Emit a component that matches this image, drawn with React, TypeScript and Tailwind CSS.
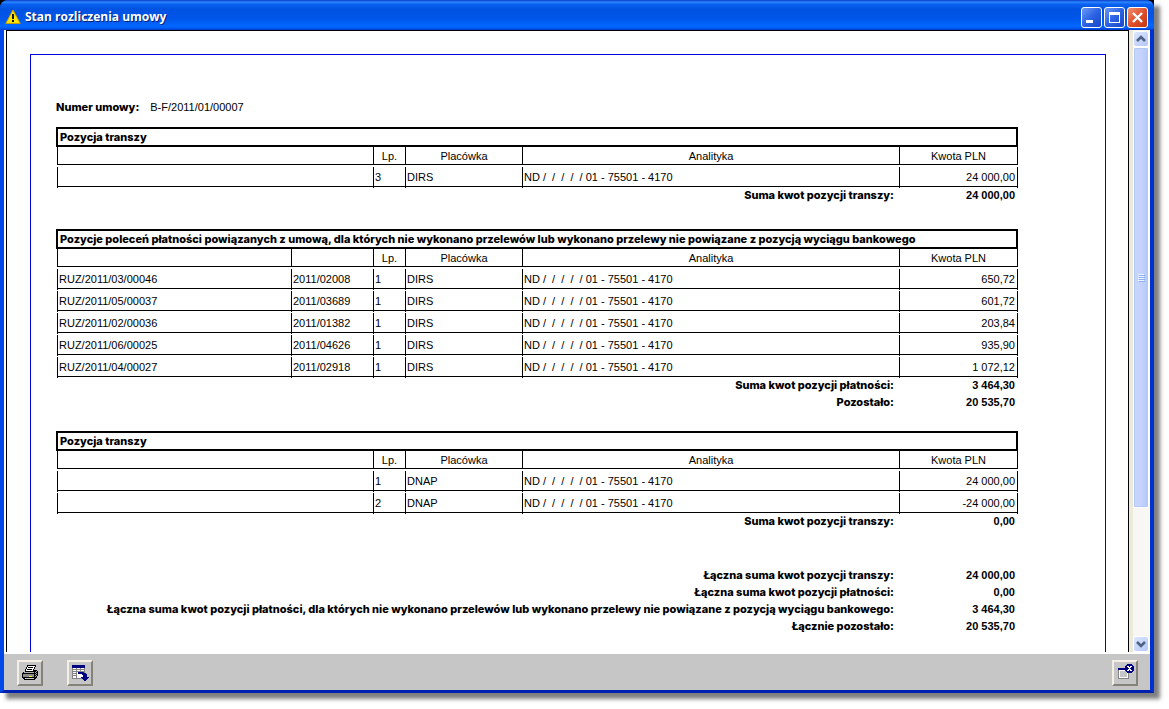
import clsx from "clsx";
import type { ReactNode } from "react";

interface Row {
  document?: string;
  order?: string;
  lp: string;
  unit: string;
  analytics: string;
  amount: string;
}

interface Sum {
  label: string;
  amount: string;
}

const ANALYTICS = "ND /  /  /  /  / 01 - 75501 - 4170";

const firstTranche: Row[] = [
  { lp: "3", unit: "DIRS", analytics: ANALYTICS, amount: "24 000,00" },
];

const payments: Row[] = [
  ["RUZ/2011/03/00046", "2011/02008", "650,72"],
  ["RUZ/2011/05/00037", "2011/03689", "601,72"],
  ["RUZ/2011/02/00036", "2011/01382", "203,84"],
  ["RUZ/2011/06/00025", "2011/04626", "935,90"],
  ["RUZ/2011/04/00027", "2011/02918", "1 072,12"],
].map(([document, order, amount]) => ({
  document,
  order,
  lp: "1",
  unit: "DIRS",
  analytics: ANALYTICS,
  amount,
}));

const secondTranche: Row[] = [
  { lp: "1", unit: "DNAP", analytics: ANALYTICS, amount: "24 000,00" },
  { lp: "2", unit: "DNAP", analytics: ANALYTICS, amount: "-24 000,00" },
];

const totals: Sum[] = [
  { label: "Łączna suma kwot pozycji transzy:", amount: "24 000,00" },
  { label: "Łączna suma kwot pozycji płatności:", amount: "0,00" },
  {
    label:
      "Łączna suma kwot pozycji płatności, dla których nie wykonano przelewów lub wykonano przelewy nie powiązane z pozycją wyciągu bankowego:",
    amount: "3 464,30",
  },
  { label: "Łącznie pozostało:", amount: "20 535,70" },
];

export default function App() {
  return (
    <div className="h-screen bg-white pr-[15px] pb-4 font-['Liberation_Sans',Arial,sans-serif] text-[11px] text-black">
      <div className="h-full bg-black shadow-[6px_6px_4px_0_rgba(0,0,0,0.5)]">
        <div className="flex h-full flex-col rounded-t-lg bg-[#0040e0]">
          <TitleBar />
          <div className="flex min-h-0 flex-1 flex-col border-x-4 border-b-[3px] border-r-[#0030d0] border-b-[#0020b0] border-l-[#0048e8]">
            <div className="flex min-h-0 flex-1 bg-white pb-[2px] pl-[2px]">
              <main className="min-w-0 flex-1 overflow-hidden border-x border-t border-black bg-white pt-[23px] pr-[22px] pl-[23px]">
                <Report />
              </main>
              <ScrollBar />
            </div>
            <BottomBar />
          </div>
        </div>
      </div>
    </div>
  );
}

function TitleBar() {
  return (
    <header className="flex h-[30px] shrink-0 items-center rounded-t-lg bg-[linear-gradient(#0a3cc8_0%,#2b86ff_7%,#0a62f0_14%,#0053e1_30%,#0055e8_60%,#0066ff_85%,#0060f8_93%,#0038c8_100%)] pt-1 pr-[6px] pl-[5px]">
      <svg width="16" height="16" viewBox="0 0 16 16" aria-hidden="true">
        <path
          d="M8 1 L15.2 14.4 H0.8 Z"
          fill="#ffe600"
          stroke="#c8a000"
          strokeLinejoin="round"
        />
        <path d="M7 5h2v5H7zM7 11h2v2H7z" fill="#111" />
      </svg>
      <h1 className="ml-1 flex-1 font-['Open_Sans',sans-serif] text-[12px] font-bold text-white [text-shadow:1px_1px_0_#00207a]">
        Stan rozliczenia umowy
      </h1>
      <div className="flex gap-[2px]">
        <CaptionButton label="Minimalizuj">
          <path d="M5 13h7v3H5z" fill="#fff" />
        </CaptionButton>
        <CaptionButton label="Maksymalizuj">
          <path d="M5 5h11v11H5zM6 8v7h9V8z" fill="#fff" fillRule="evenodd" />
        </CaptionButton>
        <CaptionButton label="Zamknij" red>
          <path d="M6 6l9 9M15 6l-9 9" stroke="#fff" strokeWidth="2.4" />
        </CaptionButton>
      </div>
    </header>
  );
}

function CaptionButton({
  label,
  red = false,
  children,
}: {
  label: string;
  red?: boolean;
  children: ReactNode;
}) {
  return (
    <button
      type="button"
      aria-label={label}
      className={clsx(
        "size-[21px] rounded-[3px] border border-white",
        red
          ? "bg-linear-to-br from-[#f09070] via-[#e0502c] to-[#c03810]"
          : "bg-linear-to-br from-[#6a98f8] via-[#2c62e4] to-[#1848c8]"
      )}
    >
      <svg width="19" height="19" viewBox="1 1 19 19">
        {children}
      </svg>
    </button>
  );
}

function Report() {
  return (
    <article className="h-full min-h-[598px] border-x border-t border-[#0000e0] pt-[44px] pr-[87px] pl-[25px] leading-[17px]">
      <p className="mb-[11px]">
        <b className="mr-[11px] font-[Inter,sans-serif] font-extrabold">
          Numer umowy:
        </b>
        B-F/2011/01/00007
      </p>
      <Section
        title="Pozycja transzy"
        rows={firstTranche}
        sums={[{ label: "Suma kwot pozycji transzy:", amount: "24 000,00" }]}
        className="mb-6"
      />
      <Section
        title="Pozycje poleceń płatności powiązanych z umową, dla których nie wykonano przelewów lub wykonano przelewy nie powiązane z pozycją wyciągu bankowego"
        rows={payments}
        sums={[
          { label: "Suma kwot pozycji płatności:", amount: "3 464,30" },
          { label: "Pozostało:", amount: "20 535,70" },
        ]}
        className="mb-[19px]"
        split
      />
      <Section
        title="Pozycja transzy"
        rows={secondTranche}
        sums={[{ label: "Suma kwot pozycji transzy:", amount: "0,00" }]}
        className="mb-[37px]"
      />
      <table className="w-full border-separate border-spacing-0">
        <tbody>
          {totals.map((sum) => (
            <SumRow key={sum.label} sum={sum} />
          ))}
        </tbody>
      </table>
    </article>
  );
}

function Section({
  title,
  rows,
  sums,
  className,
  split = false,
}: {
  title: string;
  rows: Row[];
  sums: Sum[];
  className: string;
  split?: boolean;
}) {
  return (
    <section className={className}>
      <h2 className="h-5 border-2 border-black pl-[2px] font-[Inter,sans-serif] leading-4 font-extrabold whitespace-nowrap">
        {title}
      </h2>
      <div className="pl-px">
        <table className="w-full table-fixed border-separate border-spacing-0">
          <colgroup>
            {split ? (
              <>
                <col className="w-[234px]" />
                <col className="w-[82px]" />
              </>
            ) : (
              <col className="w-[316px]" />
            )}
            <col className="w-8" />
            <col className="w-[117px]" />
            <col />
            <col className="w-[119px]" />
          </colgroup>
          <thead>
            <tr>
              <HeaderCell />
              {split && <HeaderCell />}
              <HeaderCell>Lp.</HeaderCell>
              <HeaderCell>Placówka</HeaderCell>
              <HeaderCell>Analityka</HeaderCell>
              <HeaderCell last>Kwota PLN</HeaderCell>
            </tr>
          </thead>
          <tbody>
            {rows.map((row, index) => (
              <tr key={index}>
                <Cell>{row.document}</Cell>
                {split && <Cell>{row.order}</Cell>}
                <Cell>{row.lp}</Cell>
                <Cell>{row.unit}</Cell>
                <Cell>{row.analytics}</Cell>
                <Cell last>{row.amount}</Cell>
              </tr>
            ))}
          </tbody>
          <tfoot>
            {sums.map((sum) => (
              <SumRow key={sum.label} sum={sum} span={split ? 5 : 4} />
            ))}
          </tfoot>
        </table>
      </div>
    </section>
  );
}

function HeaderCell({
  last = false,
  children,
}: {
  last?: boolean;
  children?: ReactNode;
}) {
  return (
    <th className="p-0 pb-px font-normal">
      <div
        className={clsx("h-[18px] border-b border-l border-black leading-[19px]", {
          "border-r": last,
        })}
      >
        {children}
      </div>
    </th>
  );
}

// The vertical rules run one pixel below the horizontal one
function Cell({
  last = false,
  children,
}: {
  last?: boolean;
  children?: ReactNode;
}) {
  return (
    <td className="p-0 pt-px">
      <div
        className={clsx("h-[21px] border-l border-black", {
          "border-r text-right": last,
        })}
      >
        <div
          className={clsx(
            "h-5 border-b border-black leading-5 whitespace-pre",
            last ? "pr-[2px]" : "pl-px"
          )}
        >
          {children}
        </div>
      </div>
    </td>
  );
}

function SumRow({ sum, span = 1 }: { sum: Sum; span?: number }) {
  return (
    <tr className="h-[17px] text-right align-top leading-[15px] font-bold whitespace-nowrap">
      <td
        colSpan={span}
        className="p-0 pr-[5px] font-[Inter,sans-serif] font-extrabold"
      >
        {sum.label}
      </td>
      <td className="w-[119px] p-0 pr-[3px]">{sum.amount}</td>
    </tr>
  );
}

function ScrollBar() {
  return (
    <div className="flex w-[21px] shrink-0 flex-col border-r border-l-4 border-r-white border-l-[#eceadb] bg-[#f8f7f3] pt-px">
      <ScrollButton label="W górę" path="M4 10l4-4 4 4" />
      <div className="flex flex-[461] items-center justify-center rounded-[2px] border border-white bg-linear-to-r from-[#c8d6fb] via-[#c4d3fd] to-[#b4c8f8] shadow-[inset_0_0_0_1px_#b4c8f4]">
        <svg width="7" height="8" viewBox="0 0 7 8" shapeRendering="crispEdges">
          <path d="M0 0h6v1H0zM0 2h6v1H0zM0 4h6v1H0zM0 6h6v1H0z" fill="#eef4fe" />
          <path d="M1 1h6v1H1zM1 3h6v1H1zM1 5h6v1H1zM1 7h6v1H1z" fill="#8cb0f8" />
        </svg>
      </div>
      <div className="flex-[128]" />
      <ScrollButton label="W dół" path="M4 6l4 4 4-4" />
    </div>
  );
}

function ScrollButton({ label, path }: { label: string; path: string }) {
  return (
    <button
      type="button"
      aria-label={label}
      className="size-4 shrink-0 rounded-[3px] border border-white bg-linear-to-br from-[#dce6ff] to-[#b4c8f6]"
    >
      <svg width="14" height="14" viewBox="1 1 14 14">
        <path d={path} fill="none" stroke="#4d6185" strokeWidth="2.6" />
      </svg>
    </button>
  );
}

function BottomBar() {
  return (
    <footer className="flex h-[36px] shrink-0 items-center gap-[24px] bg-[#c6c6c6] pt-[2px] pr-3 pl-[13px]">
      <ToolButton label="Drukuj">
        <path d="M7 2h9v2h-1v2h-1v3H5V6h1V4h1z" fill="#000" />
        <path d="M8 3h7v1h-1v2h-1v2H6V6h1V4h1z" fill="#fff" />
        <path d="M8 4h5v1H8zM7 6h5v1H7z" fill="#000" />
        <path d="M3 9h2V8h9V7h3v1h1v5h-1v2h-1v1h-1v1H4v-1H3v-1H2v-5h1z" fill="#000" />
        <path d="M4 9h10v1H4z" fill="#b0b0b0" />
        <path d="M3 11h11v3H3z" fill="#8a8a8a" />
        <path d="M15 9h1V8h1v1h-1v1h-1zM15 11h1v-1h1v1h-1v1h-1zM15 13h1v-1h1v1h-1v1h-1z" fill="#a8a8a8" />
        <path d="M5 15h9v1H5z" fill="#c6c6c6" />
        <path d="M9 13h3v1H9z" fill="#ff0" />
      </ToolButton>
      <ToolButton label="Eksportuj">
        <path d="M2 2h13v14H2z" fill="#848484" />
        <path d="M2 2h13v3H2z" fill="#000080" />
        <path
          d="M3 5h3v1H3zM7 5h3v1H7zM11 5h3v1h-3zM3 7h3v1H3zM7 7h3v1H7zM11 7h3v1h-3zM3 9h3v1H3zM7 9h7v6H7zM3 11h3v1H3zM3 13h3v2H3z"
          fill="#fff"
        />
        <path
          d="M8 9h6v1h2v1h1v3h2v1h-1v1h-1v1h-1v1h-2v-1h-1v-1h-1v-1h-1v-1h2v-2h-1v-1H8z"
          fill="#000080"
        />
      </ToolButton>
      <div className="ml-auto flex">
        <ToolButton label="Zamknij okno">
          <path d="M3 5h11v11H3z" fill="#848484" />
          <path d="M4 7h9v8H4z" fill="#fff" />
          <path d="M5 8h7v6H5z" fill="#c6c6c6" />
          <path d="M3 5h9v2H3z" fill="#000080" />
          <path
            d="M12 1h5v1h1v1h1v5h-1v1h-1v1h-5V9h-1V8h-1V3h1V2h1z"
            fill="#000080"
          />
          <path
            d="M12 3h2v1h1V3h2v1h-1v1h-1v1h1v1h1v1h-2V7h-1v1h-2V7h1V6h1V5h-1V4h-1z"
            fill="#fff"
          />
        </ToolButton>
      </div>
    </footer>
  );
}

function ToolButton({
  label,
  children,
}: {
  label: string;
  children: ReactNode;
}) {
  return (
    <button
      type="button"
      aria-label={label}
      className="flex size-[26px] items-center justify-center border-2 border-t-[#f4efe4] border-r-[#85827a] border-b-[#85827a] border-l-[#f4efe4] bg-[#c6c6c6]"
    >
      <svg width="20" height="20" viewBox="0 0 20 20" shapeRendering="crispEdges">
        {children}
      </svg>
    </button>
  );
}
